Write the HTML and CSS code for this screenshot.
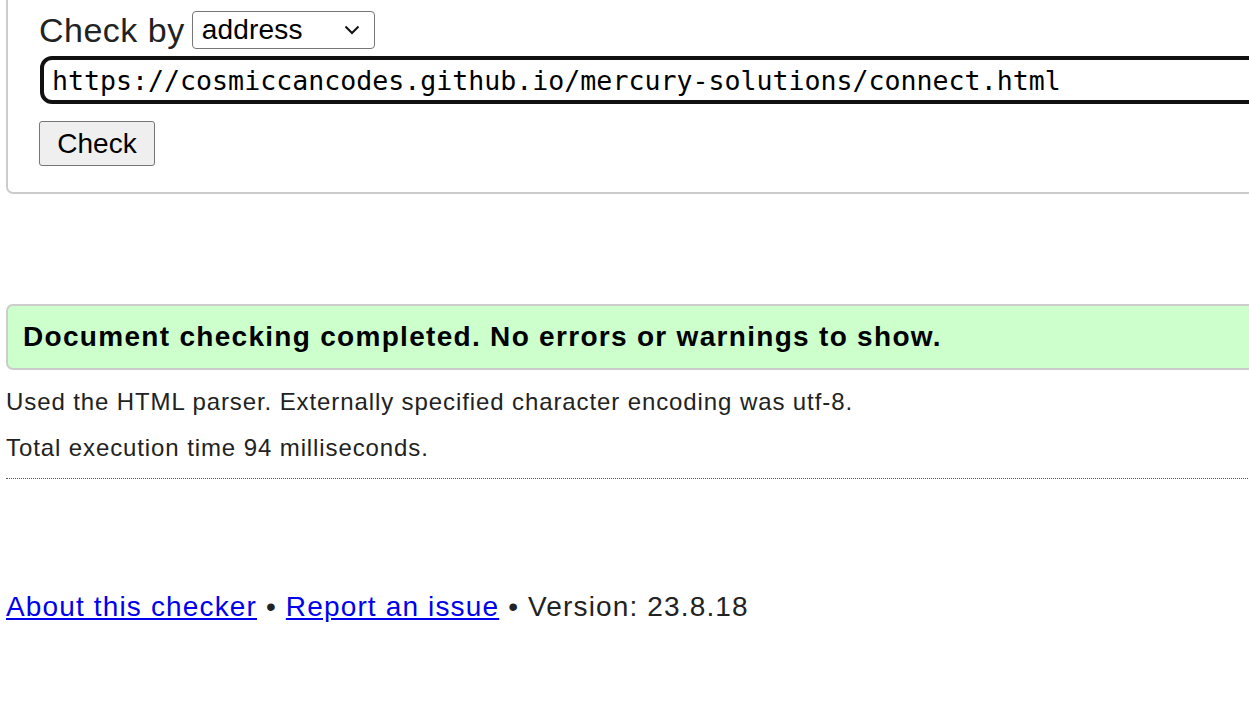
FILE: index.html
```html
<!DOCTYPE html>
<html>
<head>
<meta charset="utf-8">
<link rel="stylesheet" href="styles.css">
</head>
<body>
<div class="page">
  <form class="input-box">
    <div class="by-row">
      <span class="by-label">Check by</span>
      <span class="select">address<svg class="chev" width="16" height="10" viewBox="0 0 16 10"><path d="M1.5 1.5 L8 8 L14.5 1.5" fill="none" stroke="#111" stroke-width="2"/></svg></span>
    </div>
    <div class="url">https://cosmiccancodes.github.io/mercury-solutions/connect.html</div>
    <div class="btn-row"><span class="btn">Check</span></div>
  </form>
  <div class="gap"></div>
  <div class="success">Document checking completed. No errors or warnings to show.</div>
  <p class="detail">Used the HTML parser. Externally specified character encoding was utf-8.</p>
  <p class="detail">Total execution time 94 milliseconds.</p>
  <hr class="dotted">
  <p class="footer"><a href="#">About this checker</a> • <a href="#">Report an issue</a> • Version: 23.8.18</p>
</div>
</body>
</html>
```
FILE: styles.css
```css
html, body {
  margin: 0;
  padding: 0;
  background: #fff;
  overflow: hidden;
}
body {
  font-family: "Liberation Sans", Arial, sans-serif;
  color: #222;
}
.page {
  padding-left: 6px;
  width: 1500px;
}
.input-box {
  border: 2px solid #ccc;
  border-top: 0;
  border-radius: 0 0 7px 7px;
  padding: 10px 0 26px 31px;
}
.by-row {
  display: flex;
  align-items: center;
  height: 40px;
}
.by-label {
  font-size: 34px;
  letter-spacing: 0.5px;
  margin-right: 7px;
}
.select {
  display: flex;
  align-items: center;
  justify-content: space-between;
  box-sizing: border-box;
  width: 183px;
  height: 38px;
  border: 1px solid #767676;
  border-radius: 4px;
  padding: 0 14px 0 9px;
  font-size: 28px;
  letter-spacing: 0.2px;
  color: #000;
}
.url {
  margin-top: 6px;
  margin-left: 1px;
  box-sizing: border-box;
  height: 48px;
  border: 4px solid #111;
  border-radius: 12px;
  padding: 0 0 0 8px;
  display: flex;
  align-items: center;
  font-family: "DejaVu Sans Mono", monospace;
  font-size: 26.6px;
  color: #000;
}
.btn-row {
  margin-top: 17px;
  display: flex;
}
.btn {
  box-sizing: border-box;
  width: 116px;
  height: 45px;
  display: flex;
  align-items: center;
  justify-content: center;
  background: #efefef;
  border: 1px solid #767676;
  border-radius: 3px;
  font-size: 28px;
  color: #000;
}
.gap {
  height: 110px;
}
.success {
  box-sizing: border-box;
  height: 66px;
  border: 2px solid #ccc;
  border-radius: 7px;
  background: #ccffcc;
  display: flex;
  align-items: center;
  padding-left: 15px;
  font-weight: bold;
  font-size: 28px;
  letter-spacing: 1.3px;
  color: #000;
}
.detail {
  margin: 0;
  font-size: 24px;
  letter-spacing: 0.9px;
  line-height: 46px;
}
.detail:first-of-type {
  margin-top: 9px;
}
.dotted {
  margin: 7px 0 0 0;
  border: 0;
  border-top: 1px dotted #555;
  height: 0;
}
.footer {
  margin: 111px 0 0 0;
  font-size: 28px;
  letter-spacing: 1.15px;
  line-height: 34px;
}
.footer a {
  color: #00e;
}
```
